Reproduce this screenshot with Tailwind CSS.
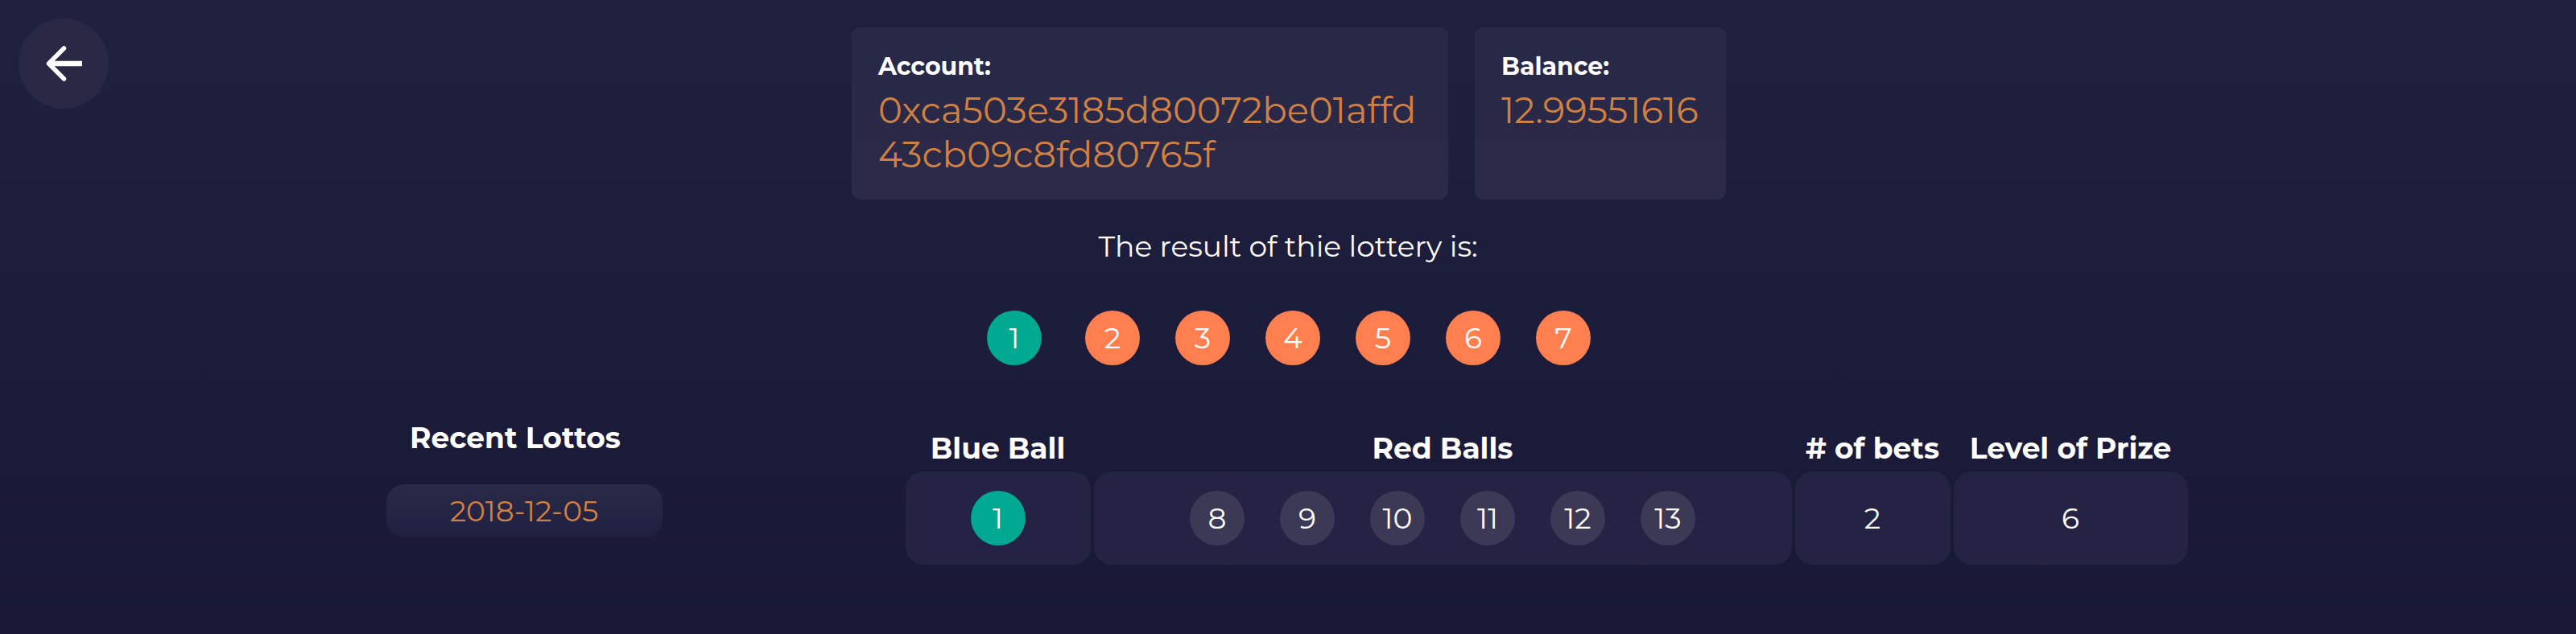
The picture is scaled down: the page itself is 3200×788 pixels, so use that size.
<!DOCTYPE html>
<html lang="en">
<head>
<meta charset="utf-8">
<meta name="viewport" content="width=device-width, initial-scale=1">
<title>Lottery result</title>
<script src="https://cdn.jsdelivr.net/npm/@tailwindcss/browser@4"></script>
</head>
<body class="min-h-screen bg-linear-to-b from-[#20203f] to-[#191937] font-['Montserrat','Inter',sans-serif] text-[36px] leading-[44px] text-white">
<button type="button" aria-label="Back" class="absolute left-[23px] top-[23px] flex size-28 items-center justify-center rounded-full bg-[#292946]">
  <svg class="size-28" viewBox="0 0 112 112" fill="none" stroke="#fff" stroke-width="5.5" aria-hidden="true">
    <path d="M56.500 37 37.500 56l19 19" stroke-linecap="round" stroke-linejoin="round"/>
    <path d="M38 56h41" stroke-width="6.500"/>
    <path d="M36 56l9-8v16z" fill="#fff" stroke="none"/>
  </svg>
</button>
<main class="pt-[34px] pb-20">
  <section class="flex justify-center gap-[33px] pl-0.5">
    <div class="w-[741px] rounded-[11px] bg-linear-to-b from-[#282847] to-[#2b2a48] px-[33px] pt-[31px] pb-[29px]">
      <h2 class="text-[30px] leading-[36px] font-bold">Account:</h2>
      <p class="mt-2 text-[45px] leading-[55px] break-all text-[#d08042]">0xca503e3185d80072be01affd43cb09c8fd80765f</p>
    </div>
    <div class="w-[312px] rounded-[11px] bg-linear-to-b from-[#282847] to-[#2b2a48] px-[33px] pt-[31px] pb-[29px]">
      <h2 class="text-[30px] leading-[36px] font-bold">Balance:</h2>
      <p class="mt-2 text-[45px] leading-[55px] text-[#d08042]">12.99551616</p>
    </div>
  </section>

  <h1 class="mt-9 text-center">The result of thie lottery is:</h1>
  <ol class="mt-[58px] flex justify-center gap-11 pl-0.5">
    <li class="mr-2.5 flex size-[68px] items-center justify-center rounded-full bg-[#00a98f]">1</li>
    <li class="flex size-[68px] items-center justify-center rounded-full bg-[#ff7f50]">2</li>
    <li class="flex size-[68px] items-center justify-center rounded-full bg-[#ff7f50]">3</li>
    <li class="flex size-[68px] items-center justify-center rounded-full bg-[#ff7f50]">4</li>
    <li class="flex size-[68px] items-center justify-center rounded-full bg-[#ff7f50]">5</li>
    <li class="flex size-[68px] items-center justify-center rounded-full bg-[#ff7f50]">6</li>
    <li class="flex size-[68px] items-center justify-center rounded-full bg-[#ff7f50]">7</li>
  </ol>

  <div class="mx-auto mt-[68px] grid w-4/5 grid-cols-4">
    <section class="flex flex-col items-center">
      <h2 class="font-bold">Recent Lottos</h2>
      <button type="button" class="mt-9 ml-[22px] w-[343px] rounded-[22px] bg-linear-to-b from-[#2a2a48] to-[#201f40] py-[11px] text-[#d08042]">2018-12-05</button>
    </section>
    <section class="col-span-3 flex justify-center pt-[13px] pl-0.5">
      <table class="border-separate border-spacing-x-1 border-spacing-y-0 text-center">
        <thead>
          <tr>
            <th scope="col" class="w-[230px] pb-[7px]">Blue Ball</th>
            <th scope="col" class="w-[867px] pb-[7px]">Red Balls</th>
            <th scope="col" class="w-[193px] pb-[7px]"># of bets</th>
            <th scope="col" class="w-[291px] pb-[7px]">Level of Prize</th>
          </tr>
        </thead>
        <tbody>
          <tr>
            <td class="rounded-[22px] bg-[#242344] py-6">
              <span class="mx-auto flex size-[68px] items-center justify-center rounded-full bg-[#00a98f]">1</span>
            </td>
            <td class="rounded-[22px] bg-[#242344] py-6">
              <div class="flex justify-center gap-11">
                <span class="flex size-[68px] items-center justify-center rounded-full bg-[#3b3955]">8</span>
                <span class="flex size-[68px] items-center justify-center rounded-full bg-[#3b3955]">9</span>
                <span class="flex size-[68px] items-center justify-center rounded-full bg-[#3b3955]">10</span>
                <span class="flex size-[68px] items-center justify-center rounded-full bg-[#3b3955]">11</span>
                <span class="flex size-[68px] items-center justify-center rounded-full bg-[#3b3955]">12</span>
                <span class="flex size-[68px] items-center justify-center rounded-full bg-[#3b3955]">13</span>
              </div>
            </td>
            <td class="rounded-[22px] bg-[#242344] py-6">2</td>
            <td class="rounded-[22px] bg-[#242344] py-6">6</td>
          </tr>
        </tbody>
      </table>
    </section>
  </div>
</main>
</body>
</html>
